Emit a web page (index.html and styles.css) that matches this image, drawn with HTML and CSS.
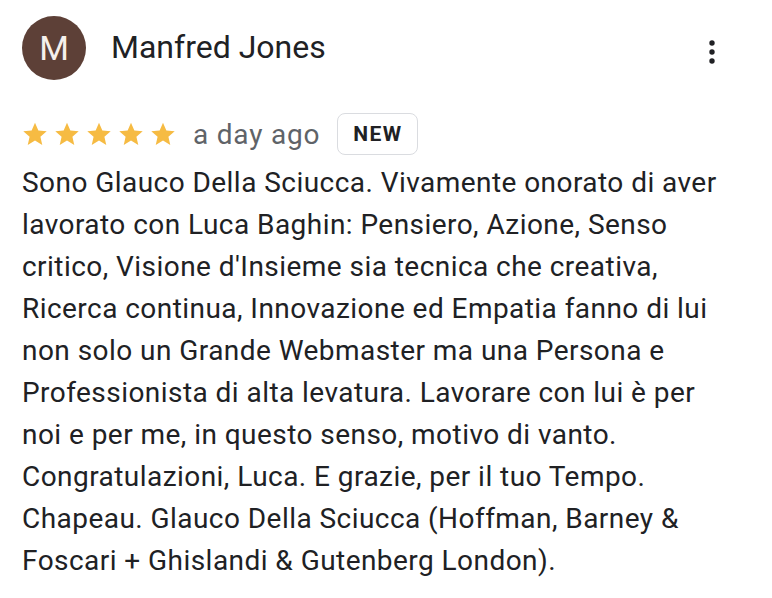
FILE: index.html
```html
<!DOCTYPE html>
<html>
<head>
<meta charset="utf-8">
<link rel="stylesheet" href="styles.css">
</head>
<body>
<div class="review">
  <div class="header">
    <div class="avatar">M</div>
    <div class="name">Manfred Jones</div>
    <div class="menu" aria-label="More options">
      <svg width="24" height="24" viewBox="0 0 24 24"><circle cx="12" cy="3" r="2.7" fill="#202124"/><circle cx="12" cy="12" r="2.7" fill="#202124"/><circle cx="12" cy="21" r="2.7" fill="#202124"/></svg>
    </div>
  </div>
  <div class="meta">
    <div class="stars">
      <svg class="star" viewBox="0 0 24 24"><path d="M12 1.6l3.1 7.1 7.7.7-5.8 5.1 1.7 7.6L12 18.1l-6.7 4 1.7-7.6-5.8-5.1 7.7-.7z"/></svg>
      <svg class="star" viewBox="0 0 24 24"><path d="M12 1.6l3.1 7.1 7.7.7-5.8 5.1 1.7 7.6L12 18.1l-6.7 4 1.7-7.6-5.8-5.1 7.7-.7z"/></svg>
      <svg class="star" viewBox="0 0 24 24"><path d="M12 1.6l3.1 7.1 7.7.7-5.8 5.1 1.7 7.6L12 18.1l-6.7 4 1.7-7.6-5.8-5.1 7.7-.7z"/></svg>
      <svg class="star" viewBox="0 0 24 24"><path d="M12 1.6l3.1 7.1 7.7.7-5.8 5.1 1.7 7.6L12 18.1l-6.7 4 1.7-7.6-5.8-5.1 7.7-.7z"/></svg>
      <svg class="star" viewBox="0 0 24 24"><path d="M12 1.6l3.1 7.1 7.7.7-5.8 5.1 1.7 7.6L12 18.1l-6.7 4 1.7-7.6-5.8-5.1 7.7-.7z"/></svg>
    </div>
    <span class="date">a day ago</span>
    <span class="badge">NEW</span>
  </div>
  <p class="text">Sono Glauco Della Sciucca. Vivamente onorato di aver<br>lavorato con Luca Baghin: Pensiero, Azione, Senso<br>critico, Visione d'Insieme sia tecnica che creativa,<br>Ricerca continua, Innovazione ed Empatia fanno di lui<br>non solo un Grande Webmaster ma una Persona e<br>Professionista di alta levatura. Lavorare con lui è per<br>noi e per me, in questo senso, motivo di vanto.<br>Congratulazioni, Luca. E grazie, per il tuo Tempo.<br>Chapeau. Glauco Della Sciucca (Hoffman, Barney &amp;<br>Foscari + Ghislandi &amp; Gutenberg London).</p>
</div>
</body>
</html>
```
FILE: styles.css
```css
html, body {
  margin: 0;
  padding: 0;
  background: #ffffff;
}
body {
  font-family: Roboto, "Noto Sans", "Liberation Sans", sans-serif;
  color: #202124;
}
.review {
  padding: 16px 0 0 22px;
  width: 750px;
}
.header {
  display: flex;
  align-items: center;
  height: 64px;
}
.avatar {
  width: 64px;
  height: 64px;
  border-radius: 50%;
  background: #5d4037;
  color: #f5f0ec;
  font-size: 34px;
  display: flex;
  align-items: center;
  justify-content: center;
  flex: none;
}
.name {
  margin-left: 25px;
  font-size: 32px;
  color: #202124;
  flex: 1;
  margin-top: -3px;
}
.menu {
  width: 24px;
  height: 24px;
  margin-right: 48px;
  margin-top: 8px;
}
.menu svg {
  display: block;
}
.meta {
  display: flex;
  align-items: center;
  margin-top: 33px;
  height: 42px;
}
.stars {
  display: flex;
  gap: 6px;
}
.star {
  width: 26px;
  height: 26px;
  fill: #f6bb43;
  display: block;
}
.date {
  margin-left: 17px;
  font-size: 28px;
  letter-spacing: 0.8px;
  color: #5f6368;
}
.badge {
  margin-left: 17px;
  height: 42px;
  box-sizing: border-box;
  border: 1px solid #dadce0;
  border-radius: 8px;
  padding: 0 14px 0 15px;
  font-size: 21px;
  font-weight: 700;
  letter-spacing: 1.4px;
  display: flex;
  align-items: center;
  color: #202124;
}
.text {
  margin: 7px 0 0;
  font-size: 28px;
  letter-spacing: 0.45px;
  line-height: 42px;
  color: #202124;
}
```
